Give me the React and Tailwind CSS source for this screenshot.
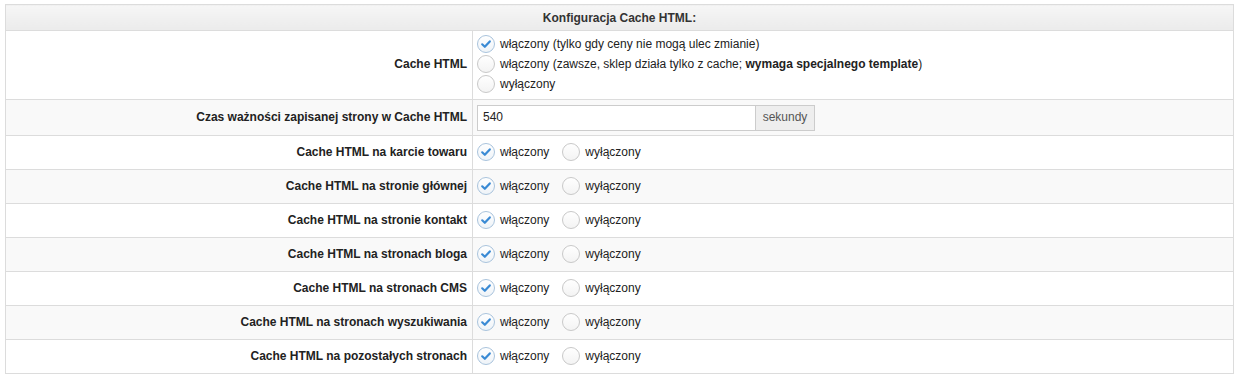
import React from "react";

function Radio({ checked }) {
  return (
    <svg width="18" height="18" viewBox="0 0 18 18" className="shrink-0">
      <defs>
        <linearGradient id={checked ? "gc" : "gu"} x1="0" y1="0" x2="0" y2="1">
          <stop offset="0" stopColor="#ffffff" />
          <stop offset="1" stopColor={checked ? "#eef3f8" : "#f3f3f3"} />
        </linearGradient>
      </defs>
      <circle
        cx="9"
        cy="9"
        r="8.5"
        fill={`url(#${checked ? "gc" : "gu"})`}
        stroke={checked ? "#a9c3dc" : "#c8c8c8"}
        strokeWidth="1"
      />
      {checked && (
        <path
          d="M5.2 9.3 L7.8 11.8 L12.8 6.4"
          fill="none"
          stroke="#3a8ad4"
          strokeWidth="2.2"
          strokeLinecap="round"
          strokeLinejoin="round"
        />
      )}
    </svg>
  );
}

function Opt({ checked, children }) {
  return (
    <label className="flex items-center gap-[5px] h-[20px]">
      <Radio checked={checked} />
      <span>{children}</span>
    </label>
  );
}

const rows = [
  "Cache HTML na karcie towaru",
  "Cache HTML na stronie głównej",
  "Cache HTML na stronie kontakt",
  "Cache HTML na stronach bloga",
  "Cache HTML na stronach CMS",
  "Cache HTML na stronach wyszukiwania",
  "Cache HTML na pozostałych stronach",
];

export default function App() {
  return (
    <div
      className="bg-white w-[1237px] h-[376px] pt-[4px] pl-[5px] text-[12px] text-[#222]"
      style={{ fontFamily: '"Liberation Sans", Arial, sans-serif' }}
    >
      <table className="border-collapse w-[1229px] table-fixed">
        <colgroup>
          <col className="w-[467px]" />
          <col />
        </colgroup>
        <tbody>
          <tr className="h-[26px]">
            <th
              colSpan={2}
              className="border border-[#dcdcdc] bg-gradient-to-b from-[#f6f6f6] to-[#ebebeb] font-bold text-[#333] text-center p-0"
            >
              Konfiguracja Cache HTML:
            </th>
          </tr>
          <tr className="h-[69px] bg-white">
            <td className="border border-[#dcdcdc] text-right font-bold pr-[5px] pb-[2px] align-middle">
              Cache HTML
            </td>
            <td className="border border-[#dcdcdc] pl-[4px] pb-[2px] align-middle">
              <div className="flex flex-col">
                <Opt checked>włączony (tylko gdy ceny nie mogą ulec zmianie)</Opt>
                <Opt>
                  włączony (zawsze, sklep działa tylko z cache;{" "}
                  <b>wymaga specjalnego template</b>)
                </Opt>
                <Opt>wyłączony</Opt>
              </div>
            </td>
          </tr>
          <tr className="h-[36px] bg-[#f9f9f9]">
            <td className="border border-[#dcdcdc] text-right font-bold pr-[5px] pb-[2px] align-middle">
              Czas ważności zapisanej strony w Cache HTML
            </td>
            <td className="border border-[#dcdcdc] pl-[4px] align-middle">
              <div className="flex h-[26px] w-[338px]">
                <div className="flex-1 border border-[#cccccc] bg-white flex items-center pl-[5px] pb-[1px] text-[#222]">
                  540
                </div>
                <div className="w-[59px] border border-l-0 border-[#cccccc] bg-[#eeeeee] flex items-center justify-center pb-[1px] text-[#555]">
                  sekundy
                </div>
              </div>
            </td>
          </tr>
          {rows.map((r, i) => (
            <tr
              key={r}
              className={`h-[34px] ${i % 2 === 1 ? "bg-[#f9f9f9]" : "bg-white"}`}
            >
              <td className="border border-[#dcdcdc] text-right font-bold pr-[5px] pb-[2px] align-middle">
                {r}
              </td>
              <td className="border border-[#dcdcdc] pl-[4px] pb-[2px] align-middle">
                <div className="flex items-center gap-[13px]">
                  <Opt checked>włączony</Opt>
                  <Opt>wyłączony</Opt>
                </div>
              </td>
            </tr>
          ))}
        </tbody>
      </table>
    </div>
  );
}
